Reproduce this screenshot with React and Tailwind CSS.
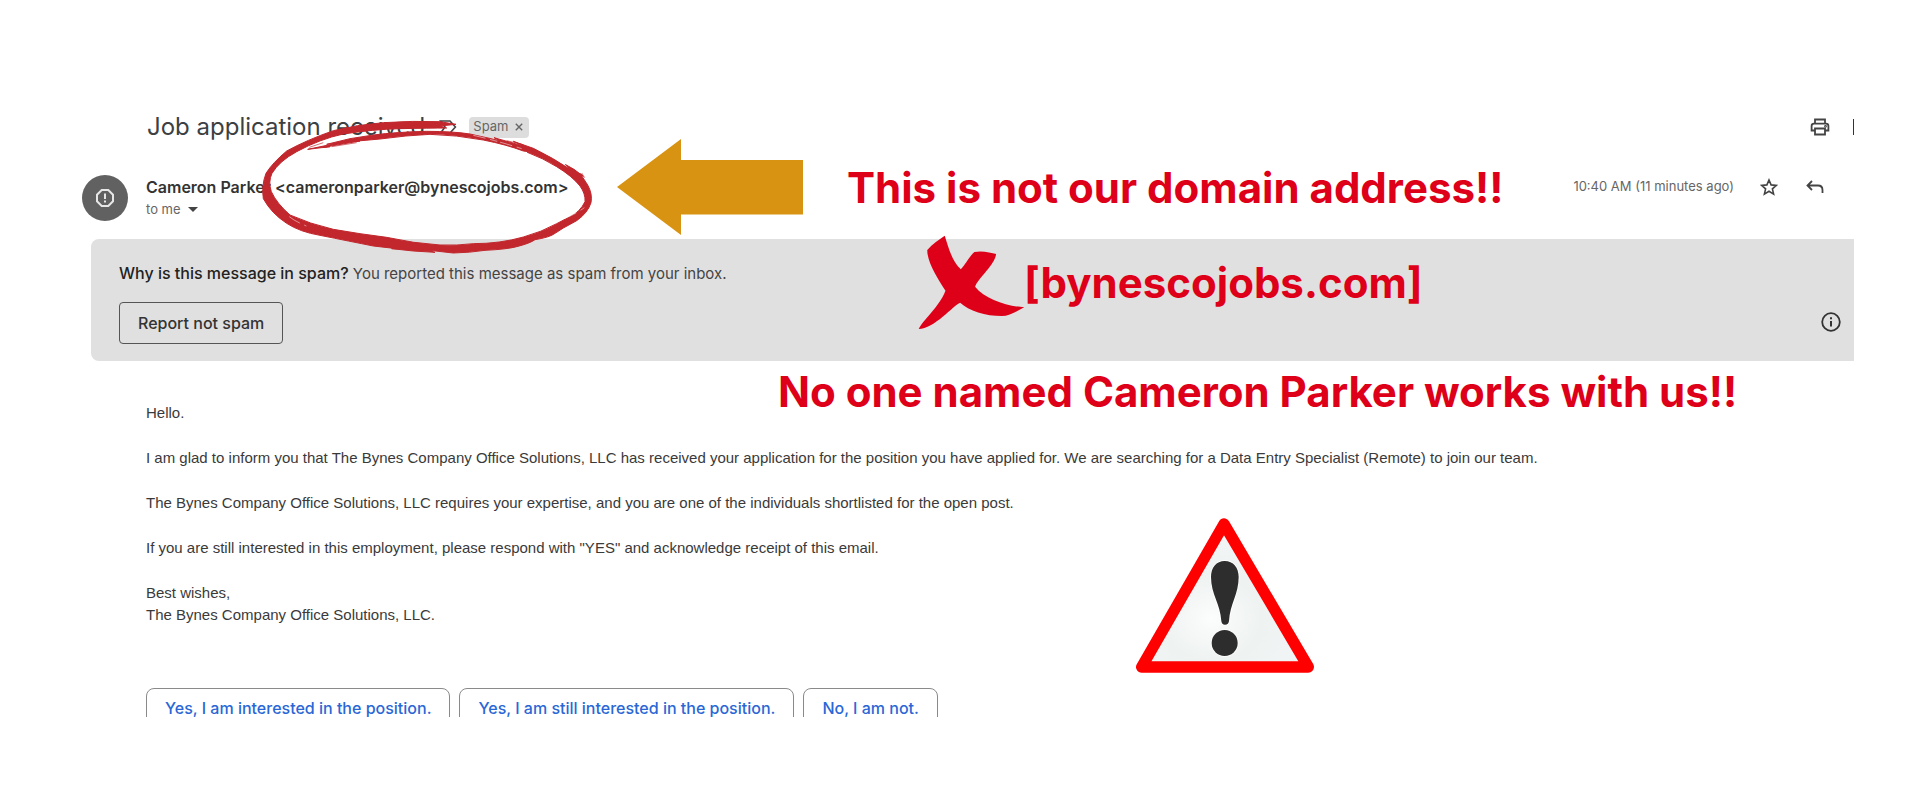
import React from "react";

const BODY = [
  ["Hello."],
  [
    "I am glad to inform you that The Bynes Company Office Solutions, LLC has received your application for the position you have applied for. We are searching for a Data Entry Specialist (Remote) to join our team.",
  ],
  [
    "The Bynes Company Office Solutions, LLC requires your expertise, and you are one of the individuals shortlisted for the open post.",
  ],
  [
    'If you are still interested in this employment, please respond with "YES" and acknowledge receipt of this email.',
  ],
  ["Best wishes,", "The Bynes Company Office Solutions, LLC."],
];

const REPLIES = [
  "Yes, I am interested in the position.",
  "Yes, I am still interested in the position.",
  "No, I am not.",
];

function SubjectRow() {
  return (
    <div className="flex h-8 items-center pl-[65px]">
      <h1 className="text-2xl leading-8 whitespace-nowrap text-[#3c4043]">Job application received</h1>
      <button type="button" aria-label="Mark as important" className="ml-[14px]">
        <svg viewBox="0 0 18 14" className="h-[14px] w-[18px]" fill="none" stroke="#444" strokeWidth="1.6">
          <path d="M1.6 1H11l5.400 6L11 13H1.6L6 7z" />
        </svg>
      </button>
      <span className="ml-3 flex h-[21px] items-center gap-[3px] rounded bg-[#dddddd] pr-[2px] pl-1 text-[13px] text-[#666]">
        Spam
        <button type="button" aria-label="Remove Spam label" className="flex size-4 items-center justify-center">
          <svg viewBox="0 0 8 8" className="size-2" stroke="#666" strokeWidth="1.4">
            <path d="M.8.8l6.4 6.4M7.2.8L.8 7.2" />
          </svg>
        </button>
      </span>
      <div className="ml-auto flex items-center gap-[23px]">
        <button type="button" aria-label="Print all">
          <svg viewBox="0 0 20 18" className="h-[18px] w-5" fill="none" stroke="#444" strokeWidth="1.8">
            <path d="M5 5.5V1.5h10v4M5 12.5H1.6V8Q1.6 5.6 4 5.6H16q2.4 0 2.4 2.4v4.5H15" />
            <path d="M5 10.5h10v6H5z" />
            <circle cx="15.5" cy="8.3" r=".5" />
          </svg>
        </button>
        <button type="button" aria-label="Open in new window" className="h-4 w-px overflow-hidden bg-[#333]" />
      </div>
    </div>
  );
}

function SenderRow() {
  return (
    <div className="mt-8 flex items-start">
      <span className="flex size-[46px] shrink-0 items-center justify-center rounded-full bg-[#616161]">
        <svg viewBox="0 0 18 18" className="size-[18px]" fill="none" stroke="#e6e6e6" strokeWidth="2">
          <path d="M5.7 1h6.6L17 5.7v6.6L12.300 17H5.7L1 12.300V5.7z" />
          <path d="M9 4.500v5.500M9 11.500v2" />
        </svg>
      </span>
      <div className="ml-[18px] whitespace-nowrap">
        <p className="text-base leading-6 font-semibold text-[#333]">
          Cameron Parker &lt;cameronparker@bynescojobs.com&gt;
        </p>
        <p className="flex items-center gap-[7px] text-[13px] leading-5 text-[#666]">
          to me
          <button type="button" aria-label="Show details">
            <svg viewBox="0 0 10 5" className="h-[5px] w-[10px]" fill="#444">
              <path d="M0 0h10L5 5z" />
            </svg>
          </button>
        </p>
      </div>
      <div className="ml-auto flex h-6 items-center pr-[30px]">
        <time className="text-[13px] whitespace-nowrap text-[#666]">10:40 AM (11 minutes ago)</time>
        <button type="button" aria-label="Star" className="ml-[26px]">
          <svg viewBox="0 0 18 18" className="size-[18px]" fill="none" stroke="#444" strokeWidth="1.6">
            <path d="M9 2l2.100 4.900 5.200.5-3.900 3.500 1.200 5.200L9 13.300l-4.600 2.800 1.200-5.200L1.700 7.400l5.200-.5z" />
          </svg>
        </button>
        <button type="button" aria-label="Reply" className="ml-7">
          <svg viewBox="0 0 18 14" className="h-[14px] w-[18px]" fill="none" stroke="#444" strokeWidth="1.8">
            <path d="M6 1L1.500 5.500 6 10M1.500 5.500H12q4.500 0 4.500 4.500v3" />
          </svg>
        </button>
      </div>
    </div>
  );
}

function SpamNotice() {
  return (
    <section className="mt-[18px] ml-[9px] flex h-[122px] justify-between rounded-l-lg bg-[#e0e0e0] pt-[22px] pr-[13px] pl-7">
      <div className="whitespace-nowrap">
        <p className="text-[15px] leading-6 text-[#444]">
          <strong className="text-base leading-6 font-medium text-[#222]">Why is this message in spam?</strong> You
          reported this message as spam from your inbox.
        </p>
        <button
          type="button"
          className="mt-4 h-[42px] rounded border border-[#555] px-[18px] text-base font-medium text-[#333]"
        >
          Report not spam
        </button>
      </div>
      <button type="button" aria-label="About spam" className="mt-[51px] size-5">
        <svg viewBox="0 0 20 20" className="size-5" fill="none" stroke="#333" strokeWidth="1.8">
          <circle cx="10" cy="10" r="8.800" />
          <path d="M10 9v5.500M10 5.300v2" strokeWidth="2" />
        </svg>
      </button>
    </section>
  );
}

function Annotations() {
  return (
    <div className="pointer-events-none absolute inset-0 text-[42px] leading-[56px] font-bold whitespace-nowrap text-[#de0019]">
      <svg viewBox="0 0 1080 510" className="absolute top-[100px] left-[240px] h-[170px] w-[360px]" fill="#c1272d">
        <path
          stroke="#c1272d"
          strokeWidth="3"
          d="M648 73L600 65Q520 62 430 68Q350 74 280 92Q200 120 140 153Q98 188 78 220Q64 256 70 296Q94 340 140 370Q180 396 240 406Q330 424 400 438L470 446L455 446L520 453L585 457L560 450L640 459Q690 458 735 451Q800 448 830 440Q870 430 885 419Q930 412 945 400L970 384L1010 362Q1044 338 1053 308Q1058 282 1043 255L1021 221L1030 229L1002 208L977 194L990 208Q940 174 880 145L820 124L850 138L762 113L780 122L690 102Q640 94 560 94Q470 96 400 105L330 116L260 133L290 130L203 148L270 140L250 142L360 123L330 125L420 117Q500 106 570 103Q650 105 730 120Q800 134 850 153L879 157L862 157Q910 175 950 200Q996 228 1020 258Q1037 282 1035 305Q1020 336 990 350L950 371Q905 396 850 411Q780 431 700 431Q650 437 600 435Q520 430 440 412L360 401L280 388Q210 372 150 345Q110 310 94 275Q84 245 96 220Q118 183 170 155Q240 117 310 102Q400 88 480 86Q570 84 620 84L600 78L648 73Z"
        />
        <path
          d="M148 350Q165 364 199 378M975 355Q1010 340 1033 323M700 106Q770 122 845 146"
          fill="none"
          stroke="#fff"
          strokeWidth="1.500"
          strokeDasharray="38 14 22 9"
        />
        <path
          d="M208 142L250 128M275 140L350 128M1025 219L1034 233M975 193L988 205M800 122L850 134"
          fill="none"
          stroke="#c1272d"
          strokeWidth="2"
        />
      </svg>
      <svg viewBox="0 0 186 96" className="absolute top-[139px] left-[617px] h-[96px] w-[186px]" fill="#d79311">
        <path d="M0 48L64 0v21h122v54.500H64V96z" />
      </svg>
      <p className="absolute top-[160px] left-[847px]">This is not our domain address!!</p>
      <svg
        viewBox="890 345 300 285"
        preserveAspectRatio="none"
        className="absolute top-[235px] left-[918px] h-[95px] w-[107px]"
        fill="#de0019"
      >
        <path d="M965 347C975 380 984 422 1010 448C1022 435 1035 408 1048 396C1070 391 1095 398 1109 402C1105 436 1060 472 1050 500C1078 538 1140 558 1188 562C1165 575 1145 588 1125 588C1080 588 1032 572 1008 548C990 555 935 627 892 627C902 602 950 560 967 512C945 475 915 425 916 390C930 372 950 358 965 347Z" />
      </svg>
      <p className="absolute top-[255px] left-[1024px]">[bynescojobs.com]</p>
      <p className="absolute top-[364px] left-[778px]">No one named Cameron Parker works with us!!</p>
      <svg viewBox="0 0 660 570" className="absolute top-[499px] left-[1120px] h-[190px] w-[220px]">
        <defs>
          <radialGradient id="signFill" cx="0.42" cy="0.66" r="0.5">
            <stop offset="0" stopColor="#fcfdfd" />
            <stop offset="0.6" stopColor="#eef2f1" />
            <stop offset="1" stopColor="#f1f4f4" />
          </radialGradient>
        </defs>
        <path d="M312 75L65 504H565Z" fill="url(#signFill)" stroke="#f00" strokeWidth="34" strokeLinejoin="round" />
        <path
          d="M314 186C340 186 356 206 356 234C356 285 330 315 327 366Q326 377 315 377Q305 377 304 366C301 315 273 285 273 234C273 206 289 186 314 186Z"
          fill="#2d2d2d"
          stroke="#fff"
          strokeWidth="5"
          paintOrder="stroke"
        />
        <circle cx="314" cy="432" r="39" fill="#2d2d2d" stroke="#fff" strokeWidth="5" paintOrder="stroke" />
      </svg>
    </div>
  );
}

export default function App() {
  return (
    <div className="relative min-h-screen overflow-hidden bg-white font-[Inter,sans-serif]">
      <main className="mr-[66px] ml-[82px] pt-[111px]">
        <SubjectRow />
        <SenderRow />
        <SpamNotice />
        <article className="mt-[41px] flex flex-col gap-[23px] pl-16 font-['Liberation_Sans',Arial,sans-serif] text-[15px] leading-[22px] text-[#3a3a3a]">
          {BODY.map((lines) => (
            <p key={lines[0]}>
              {lines.map((line) => (
                <span key={line} className="block whitespace-nowrap">
                  {line}
                </span>
              ))}
            </p>
          ))}
        </article>
        <div className="mt-[62px] flex h-[29px] items-start gap-[9px] overflow-hidden pl-16">
          {REPLIES.map((reply) => (
            <button
              key={reply}
              type="button"
              className="h-10 shrink-0 rounded-lg border border-[#8a8a8a] px-[18px] text-base leading-4 font-medium whitespace-nowrap text-[#2a67d6]"
            >
              {reply}
            </button>
          ))}
        </div>
      </main>
      <Annotations />
    </div>
  );
}
